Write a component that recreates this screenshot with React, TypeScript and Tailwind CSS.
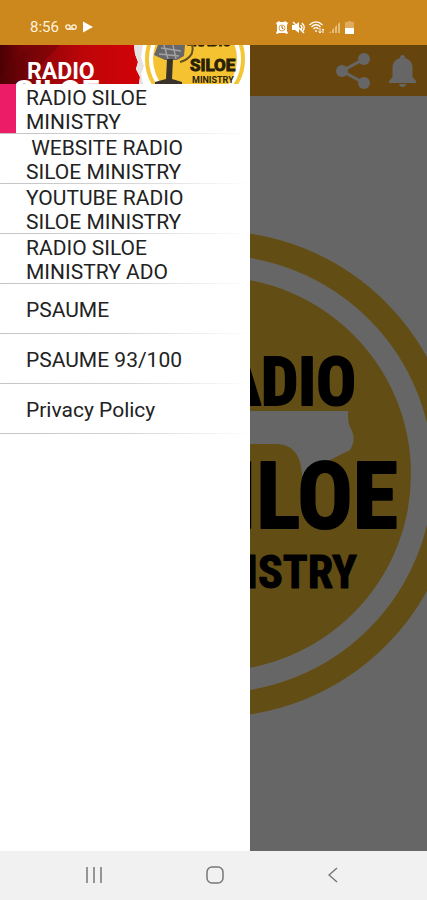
import React, { useState } from 'react';

interface MenuItem {
  id: string;
  label: string;
}

const MENU_ITEMS: MenuItem[] = [
  { id: 'radio', label: 'RADIO SILOE MINISTRY' },
  { id: 'website', label: ' WEBSITE RADIO SILOE MINISTRY' },
  { id: 'youtube', label: 'YOUTUBE RADIO SILOE MINISTRY' },
  { id: 'ado', label: 'RADIO SILOE MINISTRY ADO' },
  { id: 'psaume', label: 'PSAUME' },
  { id: 'psaume-93', label: 'PSAUME 93/100' },
  { id: 'privacy', label: 'Privacy Policy' },
];

const App: React.FC = () => {
  const [selected, setSelected] = useState('radio');

  return (
    <div className="flex min-h-screen flex-col overflow-hidden bg-white font-['Roboto',sans-serif]">
      <StatusBar />

      <div className="relative flex flex-1 flex-col overflow-hidden">
        <header className="flex h-[51px] items-center justify-end gap-4 bg-[#ffaa23] pr-[11px]">
          <button aria-label="Share" className="px-[3px]">
            <ShareIcon />
          </button>
          <button aria-label="Notifications">
            <BellIcon />
          </button>
        </header>
        <main className="flex flex-1 items-center justify-center overflow-hidden bg-white">
          <StationLogo />
        </main>

        {/* Scrim + drawer */}
        <div className="absolute inset-0 bg-black/60" />
        <aside className="absolute inset-y-0 left-0 w-[250px] bg-white">
          <DrawerBanner />
          <nav>
            <ul>
              {MENU_ITEMS.map((item) => (
                <li key={item.id}>
                  <button
                    onClick={() => setSelected(item.id)}
                    className="flex h-[49px] w-full items-stretch text-left text-[21px]/6 text-[#222]"
                  >
                    <span className={`w-4 shrink-0 ${selected === item.id ? 'bg-[#ec1c66]' : ''}`} />
                    <span className="flex flex-1 items-center pt-[3px] pr-12 pl-[10px] whitespace-pre-wrap">
                      {item.label}
                    </span>
                  </button>
                  <div className="h-px bg-linear-to-r from-[#c4c4c4] via-[#d4d4d4] to-white" />
                </li>
              ))}
            </ul>
          </nav>
        </aside>
      </div>

      <NavigationBar />
    </div>
  );
};

const StatusBar: React.FC = () => (
  <div className="flex h-[45px] items-end justify-between bg-[#cc871d] pr-[73px] pb-2 pl-[30px] text-[#fff4df]">
    <div className="flex items-center gap-[6px]">
      <span className="text-[15px]/5">8:56</span>
      <svg width="12" height="8" viewBox="0 0 12 8" fill="none" stroke="currentColor" strokeWidth="1.3">
        <circle cx="3" cy="4" r="2.2" />
        <circle cx="9" cy="4" r="2.2" />
        <path d="M3 6.2h6" />
      </svg>
      <svg width="10" height="12" viewBox="0 0 10 12" fill="#fff">
        <path d="M0 0.5 10 6 0 11.5z" />
      </svg>
    </div>
    <div className="flex h-5 items-center gap-1">
      <svg width="12" height="13" viewBox="0 0 12 13">
        <path d="M0 2 3 0l1 1h4l1-1 3 2-1 2v6l1 2-1 1-2-1H3l-2 1-1-1 1-2V4z" fill="#fff" />
        <circle cx="6" cy="7" r="3" fill="none" stroke="#dba24b" />
        <path d="M6 5v2l1.5 1" stroke="#a4650c" fill="none" />
      </svg>
      <svg width="13" height="13" viewBox="0 0 13 13">
        <path d="M0 4h3l4-3v11L3 9H0z" fill="#fff" />
        <path d="M8.5 4c2 2 2 3 0 5M10 2c3 3 3 6 0 9M1 1l11 11" stroke="#fff" fill="none" strokeWidth="1.4" />
      </svg>
      <svg width="16" height="13" viewBox="0 0 16 13" fill="none" stroke="#fff" strokeWidth="1.3">
        <path d="M0.5 4c4-4 9-4 13 0M2.5 6c3-3 6-3 9 0M4.5 8c2-2 3-2 5 0" />
        <path d="M7 9v2" />
        <path d="M11 7v5M9.5 10.5 11 12l1.5-1.5M14 12V8M13 9l1-1 1 1" strokeWidth="1" />
      </svg>
      <svg width="12" height="12" viewBox="0 0 12 12" fill="#e6bb78">
        <path d="M0 12h2v-2zM3 12h2V7L3 9zM6 12h2V4L6 6zM9 12h2V1L9 3z" />
      </svg>
      <svg width="9" height="13" viewBox="0 0 9 13">
        <path d="M3 0h3v1h3v6H0V1h3z" fill="#e0ad60" />
        <path d="M0 7h9v6H0z" fill="#fff" />
      </svg>
    </div>
  </div>
);

const ShareIcon: React.FC = () => (
  <svg width="34" height="36" viewBox="0 0 34 36" fill="#fff">
    <path d="M28 6 6 18l22 12" fill="none" stroke="#fff" strokeWidth="3" />
    <circle cx="28" cy="6" r="6" />
    <circle cx="6" cy="18" r="6" />
    <circle cx="28" cy="30" r="6" />
  </svg>
);

const BellIcon: React.FC = () => (
  <svg width="27" height="32" viewBox="0 0 27 32" fill="#fff">
    <path d="M13.5 0c1.5 0 2.500 1 2.500 3 5 1.500 7.500 5 7.500 10v9l3.500 4v2H0v-2l3.500-4v-9c0-5 2.500-8.500 7.500-10 0-2 1-3 2.500-3z" />
    <path d="M10 29h7c-.5 2-1.5 3-3.5 3S10.5 31 10 29z" />
  </svg>
);

const StationLogo: React.FC = () => (
  <svg
    width="486"
    height="486"
    viewBox="0 0 486 486"
    className="shrink-0 font-['Roboto_Condensed','Open_Sans_Condensed','Liberation_Sans_Narrow','DejaVu_Sans_Condensed',sans-serif] font-bold"
  >
    <circle cx="243" cy="243" r="231" fill="#fff" stroke="#f5c332" strokeWidth="24" />
    <circle cx="243" cy="243" r="197" fill="#f5c332" />
    {/* Microphone silhouette */}
    <path d="M180 180h197c0 7 0 13 3 18 4 7 3 15-1 21l-40 20-5 39h-2c0-20 0-36-3-47-4-14-14-18-25-18H180z" fill="#fff" />
    <g fill="#000" stroke="#000" strokeWidth="2" strokeLinejoin="round" textAnchor="end">
      <text x="385" y="174" fontSize="66">RADIO</text>
      <text x="427" y="297" fontSize="92">SILOE</text>
      <text x="386" y="357" fontSize="46" strokeWidth="1">MINISTRY</text>
    </g>
  </svg>
);

const DrawerBanner: React.FC = () => (
  <svg
    viewBox="0 0 250 39"
    className="block w-full font-['Roboto','Liberation_Sans',sans-serif] font-bold"
  >
    <defs>
      <linearGradient id="banner-red" x1="0" y1="0" x2="1" y2="0">
        <stop offset="0" stopColor="#4a0004" />
        <stop offset="0.25" stopColor="#8c0509" />
        <stop offset="0.6" stopColor="#bd0509" />
        <stop offset="1" stopColor="#d20306" />
      </linearGradient>
    </defs>
    <rect width="250" height="39" fill="#fff" />
    <path d="M0 0h134l1 9 3 8-2 7 4 8-1 7H0z" fill="url(#banner-red)" />
    <path d="M30 0h30L22 39H0v-8z" fill="#5c0307" opacity="0.35" />
    <path d="M134 0h9l-2 12 3 9-3 8 2 10h-4l1-7-4-8 2-7-3-8z" fill="#e6e2e2" />
    <g fill="#fff">
      <text x="27" y="34" fontSize="23">RADIO</text>
      <text x="14" y="57" fontSize="32">SILOE</text>
    </g>
    <circle cx="195" cy="14" r="48" fill="#fff" stroke="#f4c534" strokeWidth="4" />
    <circle cx="195" cy="14" r="42" fill="#f5c332" />
    <path d="M158 0h27l-1 11-7 4h-12l-11-5z" fill="#66666b" />
    <path d="m161 3 20 3m-22 3 20 2M164 0l4 14M173 0l3 14" stroke="#a2a2a2" strokeWidth="1.5" />
    <path d="M167 14h6l-1 20 10 3v2h-27v-2l11-3z" fill="#39332a" />
    <path d="M187 0h5c3 10-5 15-12 17" fill="none" stroke="#665125" strokeWidth="2" />
    <g fill="#272109" stroke="#272109" strokeWidth="1">
      <text x="193" y="1" fontSize="13">RADIO</text>
      <text x="190" y="26" fontSize="17">SILOE</text>
      <text x="192" y="38" fontSize="9" strokeWidth="0">MINISTRY</text>
    </g>
  </svg>
);

const NavigationBar: React.FC = () => (
  <footer className="flex h-[49px] items-center justify-between bg-[#f1f1f1] pr-[89px] pb-[2px] pl-[86px] text-[#777]">
    <button aria-label="Recent apps">
      <svg width="16" height="16" viewBox="0 0 16 16" stroke="currentColor" strokeWidth="1.5">
        <path d="M1 0v16M8 0v16M15 0v16" />
      </svg>
    </button>
    <button aria-label="Home">
      <svg width="18" height="18" viewBox="0 0 18 18" fill="none" stroke="currentColor" strokeWidth="1.5">
        <rect x="1" y="1" width="16" height="16" rx="5" />
      </svg>
    </button>
    <button aria-label="Back">
      <svg width="10" height="16" viewBox="0 0 10 16" fill="none" stroke="currentColor" strokeWidth="1.5">
        <path d="M9 1 1 8l8 7" />
      </svg>
    </button>
  </footer>
);

export default App;
